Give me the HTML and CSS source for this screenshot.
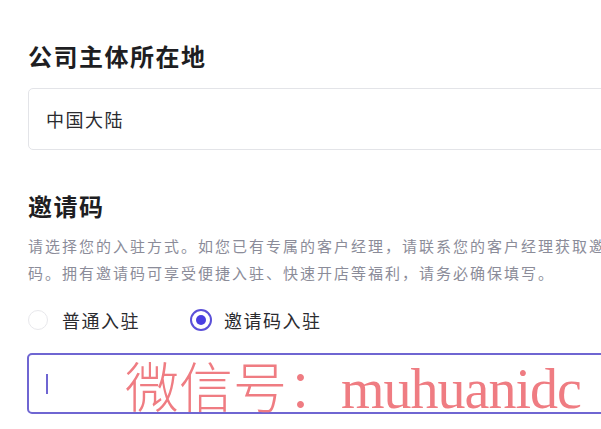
FILE: index.html
```html
<!DOCTYPE html>
<html lang="zh-CN">
<head>
<meta charset="utf-8">
<title>入驻信息</title>
<link rel="stylesheet" href="styles.css">
</head>
<body>
<main class="page">
  <section class="field">
    <h2 class="field-title">公司主体所在地</h2>
    <div class="box box-plain">
      <span class="box-value">中国大陆</span>
    </div>
  </section>

  <section class="field field-invite">
    <h2 class="field-title">邀请码</h2>
    <p class="field-desc">请选择您的入驻方式。如您已有专属的客户经理，请联系您的客户经理获取邀请码。拥有邀请码可享受便捷入驻、快速开店等福利，请务必确保填写。</p>
    <div class="radio-group">
      <label class="radio">
        <span class="radio-dot"></span>
        <span class="radio-text">普通入驻</span>
      </label>
      <label class="radio radio-checked">
        <span class="radio-dot"></span>
        <span class="radio-text">邀请码入驻</span>
      </label>
    </div>
    <div class="box box-focus">
      <span class="caret"></span>
      <span class="watermark"><span class="wm-cjk">微信号：</span><span class="wm-latin">muhuanidc</span></span>
    </div>
  </section>
</main>
</body>
</html>
```
FILE: styles.css
```css
html, body {
  margin: 0;
  padding: 0;
  background: #ffffff;
  overflow: hidden;
}

body {
  font-family: "Noto Sans CJK SC", "Noto Sans", sans-serif;
  color: #222222;
}

.page {
  width: 640px;
  padding: 40px 0 0 28px;
}

.field-title {
  margin: 0;
  font-size: 24px;
  line-height: 32px;
  font-weight: 700;
  letter-spacing: 1.5px;
  color: #1e1e22;
}

.box {
  box-sizing: border-box;
  display: flex;
  align-items: center;
  border-radius: 5px;
  background: #ffffff;
}

.box-plain {
  margin-top: 16px;
  height: 62px;
  border: 1px solid #e3e4e8;
  padding-left: 17px;
}

.box-value {
  font-size: 18px;
  letter-spacing: 1.5px;
  color: #2b2b2f;
}

.field-invite {
  margin-top: 40px;
}

.field-desc {
  margin: 10px 0 0;
  width: 600px;
  font-size: 15px;
  line-height: 27px;
  letter-spacing: 2px;
  color: #8b8c99;
}

.radio-group {
  margin-top: 22px;
  display: flex;
  align-items: center;
  height: 24px;
}

.radio {
  display: flex;
  align-items: center;
}

.radio + .radio {
  margin-left: 50px;
}

.radio-dot {
  box-sizing: border-box;
  width: 20px;
  height: 20px;
  border-radius: 50%;
  border: 1px solid #e8e8ec;
  margin-right: 14px;
  display: flex;
  align-items: center;
  justify-content: center;
}

.radio-checked .radio-dot {
  width: 22px;
  height: 22px;
  border: 2px solid #5b50d8;
  margin-right: 12px;
}

.radio-checked .radio-dot::after {
  content: "";
  width: 10px;
  height: 10px;
  border-radius: 50%;
  background: #4a3fe2;
}

.radio-text {
  font-size: 18px;
  letter-spacing: 1.5px;
  color: #2b2b2f;
}

.box-focus {
  position: relative;
  margin-top: 21px;
  margin-left: -1px;
  height: 61px;
  border: 2px solid #6f66d2;
  padding-left: 17px;
}

.caret {
  width: 2px;
  height: 20px;
  background: #6f66d2;
}

.watermark {
  position: absolute;
  left: 96px;
  top: 3px;
  white-space: nowrap;
  color: #ef7c82;
  line-height: 54px;
}

.wm-cjk {
  font-family: "Noto Sans CJK SC", sans-serif;
  font-size: 54px;
  font-weight: 300;
}

.wm-latin {
  font-family: "Liberation Serif", serif;
  font-size: 56px;
  letter-spacing: -1px;
}
```
